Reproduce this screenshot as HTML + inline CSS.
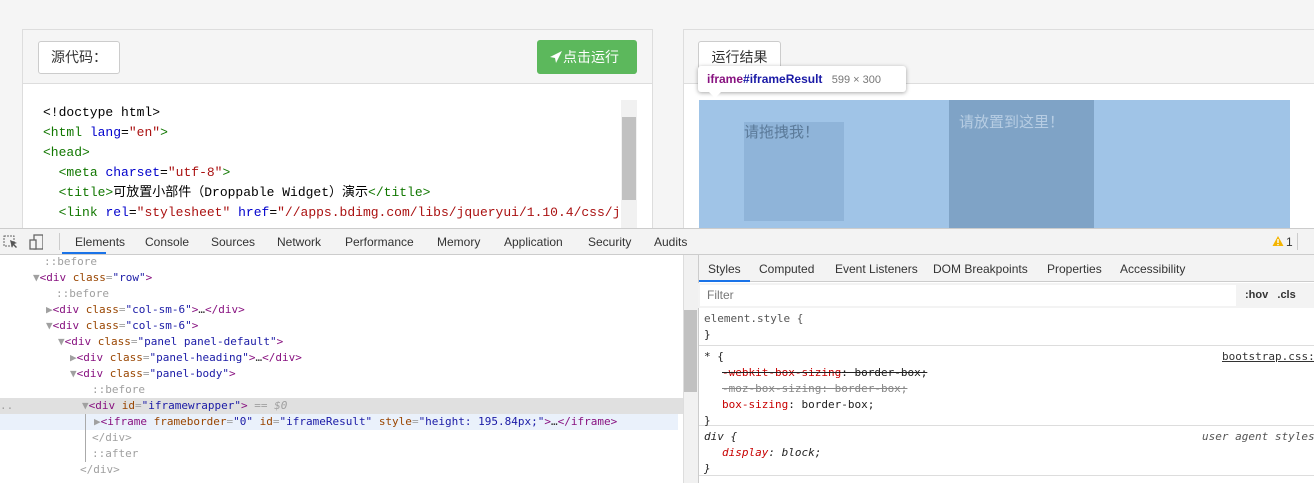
<!DOCTYPE html>
<html><head><meta charset="utf-8"><style>
*{box-sizing:border-box;margin:0;padding:0}
body{width:1314px;height:483px;overflow:hidden;background:#f5f5f5;font-family:"Liberation Sans","Noto Sans CJK SC",sans-serif;position:relative}
.a{position:absolute}
.mono{font-family:"Liberation Mono","DejaVu Sans Mono",monospace}
.code div{height:20px;line-height:20px;white-space:pre;font-size:13px}
.t{color:#170}.n{color:#00c}.s{color:#a11}
.tree div{position:absolute;height:16px;line-height:16px;font-size:11px;white-space:pre;font-family:"DejaVu Sans Mono",monospace;color:#a0a0a0}
.tg{color:#881280}.at{color:#994500}.av{color:#1a1aa6}.ps{color:#881280}
.tabs span{position:absolute;font-size:12px;color:#333;top:0;white-space:nowrap}
.st div{position:absolute;font-size:11px;white-space:pre;font-family:"DejaVu Sans Mono",monospace;color:#222}
</style></head><body>
<!-- left panel -->
<div class="a" style="left:22px;top:29px;width:631px;height:210px;border:1px solid #ddd;background:#fff"></div>
<div class="a" style="left:23px;top:30px;width:629px;height:54px;background:#f5f5f5;border-bottom:1px solid #ddd"></div>
<div class="a" style="left:38px;top:41px;width:82px;height:33px;background:#fff;border:1px solid #ccc;border-radius:3px;font-size:14px;line-height:31px;text-align:center;color:#333">源代码：</div>
<div class="a" style="left:537px;top:40px;width:100px;height:34px;background:#5cb85c;border-radius:3px;color:#fff;font-size:14px;line-height:34px;padding-left:12px;white-space:nowrap"><svg width="14" height="14" viewBox="0 0 14 14" style="vertical-align:-2px"><path d="M13 1L1 7l5 1 1 5z" fill="#fff"/></svg>点击运行</div>
<div class="a code mono" style="left:43px;top:103px;width:578px;overflow:hidden">
<div>&lt;!doctype html&gt;</div>
<div><span class="t">&lt;html</span> <span class="n">lang</span>=<span class="s">"en"</span><span class="t">&gt;</span></div>
<div class="t">&lt;head&gt;</div>
<div>  <span class="t">&lt;meta</span> <span class="n">charset</span>=<span class="s">"utf-8"</span><span class="t">&gt;</span></div>
<div>  <span class="t">&lt;title&gt;</span>可放置小部件（Droppable Widget）演示<span class="t">&lt;/title&gt;</span></div>
<div>  <span class="t">&lt;link</span> <span class="n">rel</span>=<span class="s">"stylesheet"</span> <span class="n">href</span>=<span class="s">"//apps.bdimg.com/libs/jqueryui/1.10.4/css/jq</span></div>
</div>
<div class="a" style="left:621px;top:100px;width:16px;height:128px;background:#f1f1f1"></div>
<div class="a" style="left:622px;top:117px;width:14px;height:83px;background:#c1c1c1"></div>
<!-- right panel -->
<div class="a" style="left:683px;top:29px;width:640px;height:210px;border:1px solid #ddd;background:#fff"></div>
<div class="a" style="left:684px;top:30px;width:630px;height:54px;background:#f5f5f5;border-bottom:1px solid #ddd"></div>
<div class="a" style="left:698px;top:41px;width:83px;height:33px;background:#fff;border:1px solid #ccc;border-radius:3px;font-size:14px;line-height:31px;text-align:center;color:#333">运行结果</div>
<div class="a" style="left:699px;top:100px;width:591px;height:128px;background:#a0c4e7"></div>
<div class="a" style="left:744px;top:122px;width:100px;height:99px;background:#8fb4d9;color:#5b7a99;font-size:15px;line-height:22px">请拖拽我！</div>
<div class="a" style="left:949px;top:100px;width:145px;height:128px;background:#7fa3c6;color:#b7cde3;font-size:15px;padding:11px 10px">请放置到这里！</div>
<div class="a" style="left:698px;top:66px;width:208px;height:26px;background:#fff;border-radius:3px;box-shadow:0 1px 4px rgba(0,0,0,.35);font-size:12px;line-height:26px;padding-left:9px;white-space:nowrap"><b style="color:#881280">iframe</b><b style="color:#1a1aa6">#iframeResult</b> <span style="color:#777;font-size:11px;margin-left:6px">599 × 300</span></div>
<div class="a" style="left:708px;top:91px;width:0;height:0;border-left:7px solid transparent;border-right:7px solid transparent;border-top:7px solid #fff"></div>
<!-- devtools toolbar -->
<div class="a" style="left:0;top:228px;width:1314px;height:27px;background:#f3f3f3;border-top:1px solid #ccc;border-bottom:1px solid #ccc"></div>
<svg class="a" style="left:3px;top:234px" width="40" height="16"><rect x="1" y="2" width="10" height="10" fill="none" stroke="#666" stroke-dasharray="2 1"/><path d="M7 6l7 3-3 1 3 3-1 1-3-3-1 3z" fill="#555"/><rect x="31" y="1" width="9" height="14" fill="none" stroke="#666" stroke-width="1.3"/><rect x="27" y="6" width="6" height="9" fill="#f3f3f3" stroke="#666" stroke-width="1.3"/></svg>
<div class="a" style="left:59px;top:233px;width:1px;height:17px;background:#ccc"></div>
<div class="a tabs" style="left:0;top:235px;width:1314px">
<span style="left:75px">Elements</span><span style="left:145px">Console</span><span style="left:211px">Sources</span><span style="left:277px">Network</span><span style="left:345px">Performance</span><span style="left:437px">Memory</span><span style="left:504px">Application</span><span style="left:588px">Security</span><span style="left:654px">Audits</span>
<span style="left:1286px;color:#333">1</span></div>
<svg class="a" style="left:1272px;top:235px" width="12" height="12"><path d="M6 1L11.5 11H.5z" fill="#f4b400"/><rect x="5.3" y="4" width="1.4" height="4" fill="#fff"/><rect x="5.3" y="9" width="1.4" height="1.2" fill="#fff"/></svg>
<div class="a" style="left:1297px;top:233px;width:1px;height:17px;background:#ccc"></div>
<div class="a" style="left:62px;top:252px;width:44px;height:2px;background:#1a73e8"></div>
<!-- elements tree -->
<div class="a" style="left:0;top:255px;width:683px;height:228px;background:#fff"></div>
<div class="a" style="left:0;top:398px;width:683px;height:16px;background:#e0e0e0"></div>
<div class="a" style="left:0;top:414px;width:678px;height:16px;background:#eaf1fb"></div>
<div class="a" style="left:85px;top:414px;width:1px;height:48px;background:#aaa"></div>
<div class="a tree" style="left:0;top:0">
<div style="left:44px;top:254px" class="ps">::before</div>
<div style="left:33px;top:270px">▼<span class="tg">&lt;div</span> <span class="at">class</span>=<span class="av">"row"</span><span class="tg">&gt;</span></div>
<div style="left:56px;top:286px" class="ps">::before</div>
<div style="left:46px;top:302px">▶<span class="tg">&lt;div</span> <span class="at">class</span>=<span class="av">"col-sm-6"</span><span class="tg">&gt;</span><span style="color:#333">…</span><span class="tg">&lt;/div&gt;</span></div>
<div style="left:46px;top:318px">▼<span class="tg">&lt;div</span> <span class="at">class</span>=<span class="av">"col-sm-6"</span><span class="tg">&gt;</span></div>
<div style="left:58px;top:334px">▼<span class="tg">&lt;div</span> <span class="at">class</span>=<span class="av">"panel panel-default"</span><span class="tg">&gt;</span></div>
<div style="left:70px;top:350px">▶<span class="tg">&lt;div</span> <span class="at">class</span>=<span class="av">"panel-heading"</span><span class="tg">&gt;</span><span style="color:#333">…</span><span class="tg">&lt;/div&gt;</span></div>
<div style="left:70px;top:366px">▼<span class="tg">&lt;div</span> <span class="at">class</span>=<span class="av">"panel-body"</span><span class="tg">&gt;</span></div>
<div style="left:92px;top:382px" class="ps">::before</div>
<div style="left:0;top:398px">..</div>
<div style="left:82px;top:398px">▼<span class="tg">&lt;div</span> <span class="at">id</span>=<span class="av">"iframewrapper"</span><span class="tg">&gt;</span> == <i>$0</i></div>
<div style="left:94px;top:414px">▶<span class="tg">&lt;iframe</span> <span class="at">frameborder</span>=<span class="av">"0"</span> <span class="at">id</span>=<span class="av">"iframeResult"</span> <span class="at">style</span>=<span class="av">"height: 195.84px;"</span><span class="tg">&gt;</span><span style="color:#333">…</span><span class="tg">&lt;/iframe&gt;</span></div>
<div style="left:92px;top:430px" class="tg">&lt;/div&gt;</div>
<div style="left:92px;top:446px" class="ps">::after</div>
<div style="left:80px;top:462px" class="tg">&lt;/div&gt;</div>
</div>
<div class="a" style="left:683px;top:255px;width:15px;height:228px;background:#f1f1f1;border-left:1px solid #ddd"></div>
<div class="a" style="left:684px;top:310px;width:13px;height:82px;background:#c1c1c1"></div>
<!-- sidebar -->
<div class="a" style="left:698px;top:255px;width:616px;height:228px;background:#fff;border-left:1px solid #ccc"></div>
<div class="a" style="left:699px;top:255px;width:615px;height:27px;background:#f3f3f3;border-bottom:1px solid #ccc"></div>
<div class="a tabs" style="left:0;top:262px;width:1314px"><span style="left:708px">Styles</span><span style="left:759px">Computed</span><span style="left:835px">Event Listeners</span><span style="left:933px">DOM Breakpoints</span><span style="left:1047px">Properties</span><span style="left:1120px">Accessibility</span></div>
<div class="a" style="left:699px;top:280px;width:51px;height:2px;background:#1a73e8"></div>
<div class="a" style="left:698px;top:283px;width:616px;height:25px;background:#f3f3f3"></div>
<div class="a" style="left:700px;top:285px;width:536px;height:21px;background:#fff;font-size:12px;color:#777;line-height:21px;padding-left:7px">Filter</div>
<div class="a" style="left:1245px;top:289px;font-size:11px;font-weight:bold;color:#333;white-space:nowrap">:hov&nbsp;&nbsp; .cls</div>
<div class="a" style="left:699px;top:345px;width:615px;height:1px;background:#ddd"></div>
<div class="a" style="left:699px;top:425px;width:615px;height:1px;background:#ddd"></div>
<div class="a" style="left:699px;top:475px;width:615px;height:1px;background:#ddd"></div>
<div class="a st" style="left:0;top:0">
<div style="left:704px;top:312px;color:#555">element.style {</div>
<div style="left:704px;top:328px">}</div>
<div style="left:704px;top:350px">* {</div>
<div style="left:1222px;top:350px;text-decoration:underline;color:#333">bootstrap.css:</div>
<div style="left:722px;top:366px;text-decoration:line-through"><span style="color:#c80000">-webkit-box-sizing</span>: border-box;</div>
<div style="left:722px;top:382px;text-decoration:line-through;color:#888">-moz-box-sizing: border-box;</div>
<div style="left:722px;top:398px"><span style="color:#c80000">box-sizing</span>: border-box;</div>
<div style="left:704px;top:414px">}</div>
<div style="left:704px;top:430px;font-style:italic">div {</div>
<div style="left:1202px;top:430px;font-style:italic;color:#555">user agent styles</div>
<div style="left:722px;top:446px;font-style:italic"><span style="color:#c80000">display</span>: block;</div>
<div style="left:704px;top:462px;font-style:italic">}</div>
</div>
</body></html>
